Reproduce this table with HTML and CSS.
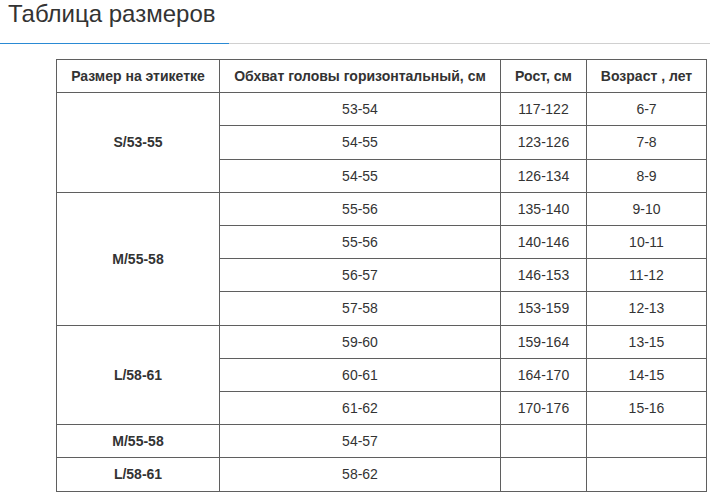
FILE: index.html
```html
<!DOCTYPE html>
<html lang="ru">
<head>
<meta charset="utf-8">
<title>Таблица размеров</title>
<link rel="stylesheet" href="styles.css">
</head>
<body>
<div class="head">
  <h1 class="title">Таблица размеров</h1>
</div>
<table class="sizes">
  <colgroup>
    <col class="c1"><col class="c2"><col class="c3"><col class="c4">
  </colgroup>
  <thead>
    <tr><th>Размер на этикетке</th><th>Обхват головы горизонтальный, см</th><th>Рост, см</th><th>Возраст , лет</th></tr>
  </thead>
  <tbody>
    <tr><td class="lbl" rowspan="3">S/53-55</td><td>53-54</td><td>117-122</td><td>6-7</td></tr>
    <tr><td>54-55</td><td>123-126</td><td>7-8</td></tr>
    <tr><td>54-55</td><td>126-134</td><td>8-9</td></tr>
    <tr><td class="lbl" rowspan="4">M/55-58</td><td>55-56</td><td>135-140</td><td>9-10</td></tr>
    <tr><td>55-56</td><td>140-146</td><td>10-11</td></tr>
    <tr><td>56-57</td><td>146-153</td><td>11-12</td></tr>
    <tr><td>57-58</td><td>153-159</td><td>12-13</td></tr>
    <tr><td class="lbl" rowspan="3">L/58-61</td><td>59-60</td><td>159-164</td><td>13-15</td></tr>
    <tr><td>60-61</td><td>164-170</td><td>14-15</td></tr>
    <tr><td>61-62</td><td>170-176</td><td>15-16</td></tr>
    <tr><td class="lbl">M/55-58</td><td>54-57</td><td></td><td></td></tr>
    <tr><td class="lbl">L/58-61</td><td>58-62</td><td></td><td></td></tr>
  </tbody>
</table>
</body>
</html>
```
FILE: styles.css
```css
html, body {
  margin: 0;
  padding: 0;
  background: #fff;
}
body {
  font-family: "Liberation Sans", Arial, sans-serif;
  color: #333;
}
.head {
  border-bottom: 1px solid #d0d0d0;
  height: 43px;
}
.title {
  margin: 0;
  width: 229px;
  box-sizing: border-box;
  height: 44px;
  padding: 0 0 0 8px;
  font-size: 24px;
  font-weight: normal;
  line-height: 28px;
  color: #333;
  border-bottom: 1px solid #2a8ad4;
}
.sizes {
  margin: 15px 0 0 56px;
  border-collapse: collapse;
  table-layout: fixed;
  width: 650px;
  font-size: 14px;
  color: #333;
}
.c1 { width: 163px; }
.c2 { width: 281px; }
.c3 { width: 86px; }
.c4 { width: 120px; }
.sizes th,
.sizes td {
  border: 1px solid #5f5f5f;
  text-align: center;
  vertical-align: middle;
  padding: 7px 4px;
  line-height: 18.2px;
  height: 18.2px;
}
.sizes th {
  font-weight: bold;
}
.sizes td.lbl {
  font-weight: bold;
}
```
